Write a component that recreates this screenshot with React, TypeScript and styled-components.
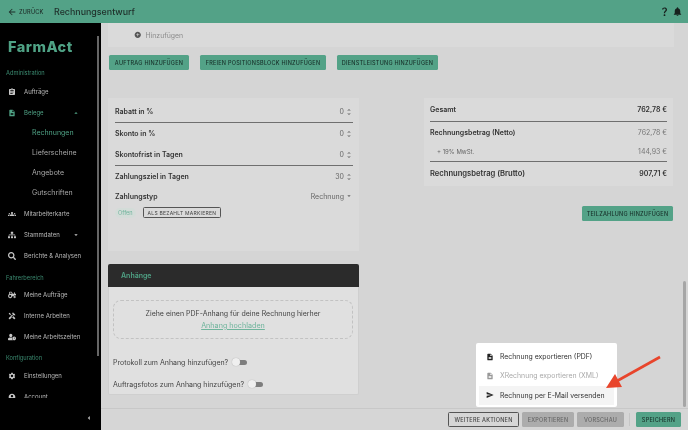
import React from 'react'
import styled, { createGlobalStyle } from 'styled-components'
import {
  MdArrowBack, MdQuestionMark, MdNotifications, MdAssignment, MdDescription, MdGroups,
  MdSettings, MdAccountCircle, MdAddCircle, MdHandyman,
  MdUnfoldMore, MdArrowDropDown, MdArrowDropUp, MdArrowLeft, MdSend,
} from 'react-icons/md'
import { FaSitemap, FaSearch, FaTractor, FaUserClock } from 'react-icons/fa'

const GlobalStyle = createGlobalStyle`
  html, body { margin: 0; padding: 0; width: 688px; height: 430px; overflow: hidden; background: #d5d5d5; }
  * { box-sizing: border-box; }
  body { font-family: Inter, "Liberation Sans", sans-serif; color: #333; }
`

const Shell = styled.div`
  position: relative;
  width: 688px;
  height: 430px;
  overflow: hidden;
`

const Blurred = styled.div`
  width: 688px;
  height: 430px;
  display: flex;
  flex-direction: column;
  filter: blur(0.45px);
`

const Header = styled.header`
  height: 23px;
  flex: none;
  background: #53a287;
  display: flex;
  align-items: center;
  padding: 0 5px 0 7px;
  color: #1f2f2a;
`

const BackLink = styled.span`
  display: flex;
  align-items: center;
  gap: 2px;
  font-size: 5.6px;
  font-weight: 500;
  letter-spacing: 0.2px;
  width: 47px;
  svg { font-size: 10px; }
`

const Title = styled.h1`
  margin: 0;
  flex: 1;
  font-size: 8.9px;
  font-weight: 500;
`

const HeaderIcons = styled.div`
  display: flex;
  gap: 2px;
  font-size: 11px;
  color: #17211e;
`

const Body = styled.div`
  flex: 1;
  display: flex;
  min-height: 0;
`

const Sidebar = styled.aside`
  width: 101px;
  flex: none;
  background: #000;
  display: flex;
  flex-direction: column;
  position: relative;
`

const SideScroll = styled.div`
  height: 375px;
  overflow: hidden;
  padding: 15px 0 0 6px;
`

const SideThumb = styled.div`
  position: absolute;
  top: 13px;
  left: 97px;
  width: 2px;
  height: 320px;
  background: #666;
`

const Logo = styled.div`
  font-size: 14.5px;
  font-weight: 800;
  color: #4fa285;
  letter-spacing: 0.5px;
  line-height: 17px;
  margin: 0 0 12px 2px;
`

const SideHeading = styled.div<{ $above?: number; $below?: number }>`
  font-size: 5.7px;
  color: #3b8a70;
  height: 11px;
  line-height: 11px;
  margin-top: ${p => p.$above ?? 0}px;
  margin-bottom: ${p => p.$below ?? 1}px;
`

const SideItem = styled.div<{ $active?: boolean }>`
  height: 21px;
  display: flex;
  align-items: center;
  font-size: 6px;
  color: ${p => (p.$active ? '#4fa285' : '#b8b8b8')};
  svg:first-child { width: 8px; height: 8px; margin: 0 8px 0 2px; color: ${p => (p.$active ? '#4fa285' : '#c8c8c8')}; }
`

const SideCaret = styled.span`
  margin-left: auto;
  margin-right: 13px;
  display: flex;
  font-size: 8px;
`

const SubItem = styled.div<{ $active?: boolean }>`
  height: 20px;
  line-height: 20px;
  padding-left: 26px;
  font-size: 7px;
  color: ${p => (p.$active ? '#4fa285' : '#a8a8a8')};
`

const SideFooter = styled.div`
  flex: 1;
  display: flex;
  justify-content: flex-end;
  align-items: center;
  padding: 8px 7px 0 0;
  color: #bbb;
  font-size: 10px;
`

const Main = styled.main`
  flex: 1;
  display: flex;
  flex-direction: column;
  min-width: 0;
  background: #d5d5d5;
`

const Content = styled.div`
  flex: 1;
  padding: 0 14px 0 7px;
  min-height: 0;
  overflow: hidden;
`

const AddCard = styled.div`
  height: 24px;
  background: #dadada;
  display: flex;
  align-items: center;
  gap: 4px;
  padding-left: 26px;
  font-size: 6.9px;
  color: #8c8c8c;
  svg { font-size: 7.5px; color: #555; }
`

const ButtonRow = styled.div`
  display: flex;
  gap: 11px;
  margin: 8px 0 28px 1px;
`

const Button = styled.button<{ $variant?: 'green' | 'outline' | 'grey'; $width?: number }>`
  height: 15px;
  width: ${p => (p.$width ? `${p.$width}px` : 'auto')};
  padding: 0;
  border-radius: 1.5px;
  font-family: inherit;
  font-size: 5.5px;
  font-weight: 500;
  letter-spacing: 0.25px;
  white-space: nowrap;
  border: ${p => (p.$variant === 'outline' ? '1px solid #555' : 'none')};
  background: ${p => (p.$variant === 'green' ? '#53a287' : p.$variant === 'grey' ? '#acacac' : 'transparent')};
  color: ${p => (p.$variant === 'green' ? '#173029' : p.$variant === 'grey' ? '#666' : '#444')};
`

const Columns = styled.div`
  display: grid;
  grid-template-columns: 251px 250px;
  justify-content: space-between;
  width: 566px;
`

const Card = styled.section`
  background: #dadada;
  padding: 0 6px 0 7px;
`

const InvoiceCard = styled(Card)`
  height: 153px;
  padding-top: 3px;
`

const TotalsCard = styled(Card)`
  height: 88px;
  padding: 0 6px;
`

const Row = styled.div<{ $rule?: boolean; $height?: number; $weak?: boolean; $indent?: boolean; $large?: boolean }>`
  height: ${p => p.$height ?? 21}px;
  display: flex;
  align-items: center;
  justify-content: space-between;
  border-bottom: ${p => (p.$rule ? '1px solid #6f6f6f' : 'none')};
  font-size: ${p => (p.$weak ? 6 : p.$large ? 7.6 : 7)}px;
  font-weight: ${p => (p.$weak ? 400 : 600)};
  color: ${p => (p.$weak ? '#666' : '#333')};
  padding-left: ${p => (p.$indent ? 7 : 0)}px;
`

const RowValue = styled.span<{ $strong?: boolean; $faint?: boolean }>`
  display: flex;
  align-items: center;
  gap: 1px;
  font-size: 7px;
  font-weight: ${p => (p.$strong ? 600 : 400)};
  color: ${p => (p.$faint ? '#777' : p.$strong ? '#333' : '#666')};
  svg { font-size: 8px; }
`

const StatusRow = styled.div`
  display: flex;
  align-items: center;
  gap: 7px;
  margin-top: 2px;
`

const StatusChip = styled.span`
  background: #d3dcd8;
  color: #6fb49c;
  font-size: 5.6px;
  border-radius: 5px;
  padding: 2px 3px;
`

const SmallOutline = styled(Button)`
  height: 11px;
  padding: 0 4px;
  font-size: 5px;
  font-weight: 400;
`

const RightColumn = styled.div`
  display: flex;
  flex-direction: column;
  align-items: flex-end;
  gap: 20px;
  padding-right: 1px;
`

const TotalsFill = styled.div`
  width: 100%;
`

const Attachments = styled.section`
  width: 251px;
  margin-top: 13px;
  background: #e0e0e0;
  border: 1px solid #cfcfcf;
  border-top: none;
  border-radius: 2px;
  height: 131px;
`

const AttachHeader = styled.div`
  height: 23px;
  margin: 0 -1px;
  background: #2b2b2b;
  border-radius: 2px 2px 0 0;
  color: #4fa285;
  font-size: 7px;
  font-weight: 600;
  display: flex;
  align-items: center;
  padding-left: 13px;
`

const DropZone = styled.div`
  margin: 13px 5px 0 4px;
  height: 39px;
  border: 1px dashed #c2c2c2;
  border-radius: 8px;
  display: flex;
  flex-direction: column;
  align-items: center;
  justify-content: center;
  gap: 3px;
  font-size: 7px;
  color: #444;
`

const UploadLink = styled.a`
  color: #6fb49c;
  text-decoration: underline;
  font-size: 7.2px;
`

const ToggleList = styled.div`
  margin-top: 12px;
  display: flex;
  flex-direction: column;
`

const ToggleRow = styled.div`
  display: flex;
  align-items: center;
  gap: 5px;
  height: 22px;
  padding-left: 4px;
  font-size: 7px;
  color: #444;
`

const Toggle = styled.span`
  position: relative;
  width: 14px;
  height: 5px;
  border-radius: 3px;
  background: #7d7d7d;
  &::before {
    content: '';
    position: absolute;
    left: -1px;
    top: -1.5px;
    width: 8px;
    height: 8px;
    border-radius: 50%;
    background: #efefef;
    box-shadow: 0 0 1px #999;
  }
`

const Footer = styled.footer`
  height: 22px;
  flex: none;
  border-top: 1px solid #c8c8c8;
  background: #d6d6d6;
  display: flex;
  align-items: center;
  justify-content: flex-end;
  gap: 3px;
  padding-right: 7px;
`

const FooterDivider = styled.span`
  width: 1px;
  height: 13px;
  background: #c6c6c6;
  margin: 0 3px 0 2px;
`

const PageThumb = styled.div`
  position: absolute;
  left: 683px;
  top: 281px;
  width: 3px;
  height: 126px;
  border-radius: 2px;
  background: #a6a6a6;
`

const Menu = styled.div`
  position: absolute;
  left: 476px;
  top: 343px;
  width: 141px;
  height: 64px;
  background: #fff;
  border-radius: 2px;
  padding: 4px 3px 2px;
  display: flex;
  flex-direction: column;
  filter: blur(0.35px);
`

const MenuItem = styled.div<{ $disabled?: boolean; $hover?: boolean }>`
  flex: 1;
  display: flex;
  align-items: center;
  gap: 6px;
  padding-left: 7px;
  font-size: 6.9px;
  background: ${p => (p.$hover ? '#f4f4f4' : 'transparent')};
  color: ${p => (p.$disabled ? '#aaa' : '#333')};
  svg { font-size: 8px; color: ${p => (p.$disabled ? '#999' : '#222')}; }
`

const Arrow = styled.svg`
  position: absolute;
  left: 600px;
  top: 350px;
  width: 66px;
  height: 45px;
`

const mainNav = [
  { icon: <MdGroups />, label: 'Mitarbeiterkarte' },
  { icon: <FaSitemap />, label: 'Stammdaten', caret: <MdArrowDropDown /> },
  { icon: <FaSearch />, label: 'Berichte & Analysen' },
]
const driverNav = [
  { icon: <FaTractor />, label: 'Meine Aufträge' },
  { icon: <MdHandyman />, label: 'Interne Arbeiten' },
  { icon: <FaUserClock />, label: 'Meine Arbeitszeiten' },
]
const subNav = ['Lieferscheine', 'Angebote', 'Gutschriften']

function Stepper({ value }: { value: string }) {
  return <RowValue>{value}<MdUnfoldMore /></RowValue>
}

export default function App() {
  return (
    <Shell>
      <GlobalStyle />
      <Blurred>
        <Header>
          <BackLink><MdArrowBack />ZURÜCK</BackLink>
          <Title>Rechnungsentwurf</Title>
          <HeaderIcons><MdQuestionMark /><MdNotifications /></HeaderIcons>
        </Header>
        <Body>
          <Sidebar>
            <SideThumb />
            <SideScroll>
              <Logo>FarmAct</Logo>
              <SideHeading $below={3}>Administration</SideHeading>
              <SideItem><MdAssignment />Aufträge</SideItem>
              <SideItem $active><MdDescription />Belege<SideCaret><MdArrowDropUp /></SideCaret></SideItem>
              <SubItem $active>Rechnungen</SubItem>
              {subNav.map(s => <SubItem key={s}>{s}</SubItem>)}
              {mainNav.map(n => <SideItem key={n.label}>{n.icon}{n.label}{n.caret && <SideCaret>{n.caret}</SideCaret>}</SideItem>)}
              <SideHeading $above={6}>Fahrerbereich</SideHeading>
              {driverNav.map(n => <SideItem key={n.label}>{n.icon}{n.label}</SideItem>)}
              <SideHeading $above={5} $below={2}>Konfiguration</SideHeading>
              <SideItem><MdSettings />Einstellungen</SideItem>
              <SideItem><MdAccountCircle />Account</SideItem>
            </SideScroll>
            <SideFooter><MdArrowLeft /></SideFooter>
          </Sidebar>
          <Main>
            <Content>
              <AddCard><MdAddCircle />Hinzufügen</AddCard>
              <ButtonRow>
                <Button $variant="green" $width={80}>AUFTRAG HINZUFÜGEN</Button>
                <Button $variant="green" $width={126}>FREIEN POSITIONSBLOCK HINZUFÜGEN</Button>
                <Button $variant="green" $width={101}>DIENSTLEISTUNG HINZUFÜGEN</Button>
              </ButtonRow>
              <Columns>
                <InvoiceCard>
                  <Row $rule $height={22}>Rabatt in %<Stepper value="0" /></Row>
                  <Row>Skonto in %<Stepper value="0" /></Row>
                  <Row $rule $height={22}>Skontofrist in Tagen<Stepper value="0" /></Row>
                  <Row>Zahlungsziel in Tagen<Stepper value="30" /></Row>
                  <Row $height={18}>Zahlungstyp<RowValue>Rechnung<MdArrowDropDown /></RowValue></Row>
                  <StatusRow>
                    <StatusChip>Offen</StatusChip>
                    <SmallOutline $variant="outline">ALS BEZAHLT MARKIEREN</SmallOutline>
                  </StatusRow>
                </InvoiceCard>
                <RightColumn>
                  <TotalsFill>
                    <TotalsCard>
                      <Row $rule $height={24}>Gesamt<RowValue $strong>762,78 €</RowValue></Row>
                      <Row $height={20}>Rechnungsbetrag (Netto)<RowValue $faint>762,78 €</RowValue></Row>
                      <Row $rule $height={20} $weak $indent>+ 19% MwSt.<RowValue $faint>144,93 €</RowValue></Row>
                      <Row $height={23} $large>Rechnungsbetrag (Brutto)<RowValue $strong>907,71 €</RowValue></Row>
                    </TotalsCard>
                  </TotalsFill>
                  <Button $variant="green" $width={91}>TEILZAHLUNG HINZUFÜGEN</Button>
                </RightColumn>
              </Columns>
              <Attachments>
                <AttachHeader>Anhänge</AttachHeader>
                <DropZone>
                  Ziehe einen PDF-Anhang für deine Rechnung hierher
                  <UploadLink>Anhang hochladen</UploadLink>
                </DropZone>
                <ToggleList>
                  <ToggleRow>Protokoll zum Anhang hinzufügen?<Toggle /></ToggleRow>
                  <ToggleRow>Auftragsfotos zum Anhang hinzufügen?<Toggle /></ToggleRow>
                </ToggleList>
              </Attachments>
            </Content>
            <Footer>
              <Button $variant="outline" $width={71}>WEITERE AKTIONEN</Button>
              <Button $variant="grey" $width={52}>EXPORTIEREN</Button>
              <Button $variant="grey" $width={47}>VORSCHAU</Button>
              <FooterDivider />
              <Button $variant="green" $width={45}>SPEICHERN</Button>
            </Footer>
          </Main>
        </Body>
      </Blurred>
      <PageThumb />
      <Menu>
        <MenuItem><MdDescription />Rechnung exportieren (PDF)</MenuItem>
        <MenuItem $disabled><MdDescription />XRechnung exportieren (XML)</MenuItem>
        <MenuItem $hover><MdSend />Rechnung per E-Mail versenden</MenuItem>
      </Menu>
      <Arrow viewBox="0 0 66 45">
        <path d="M60 7 L17 31" stroke="#e8452c" strokeWidth="2.6" fill="none" />
        <path d="M6 38 L15 24 L22 37 Z" fill="#e8452c" />
      </Arrow>
    </Shell>
  )
}
